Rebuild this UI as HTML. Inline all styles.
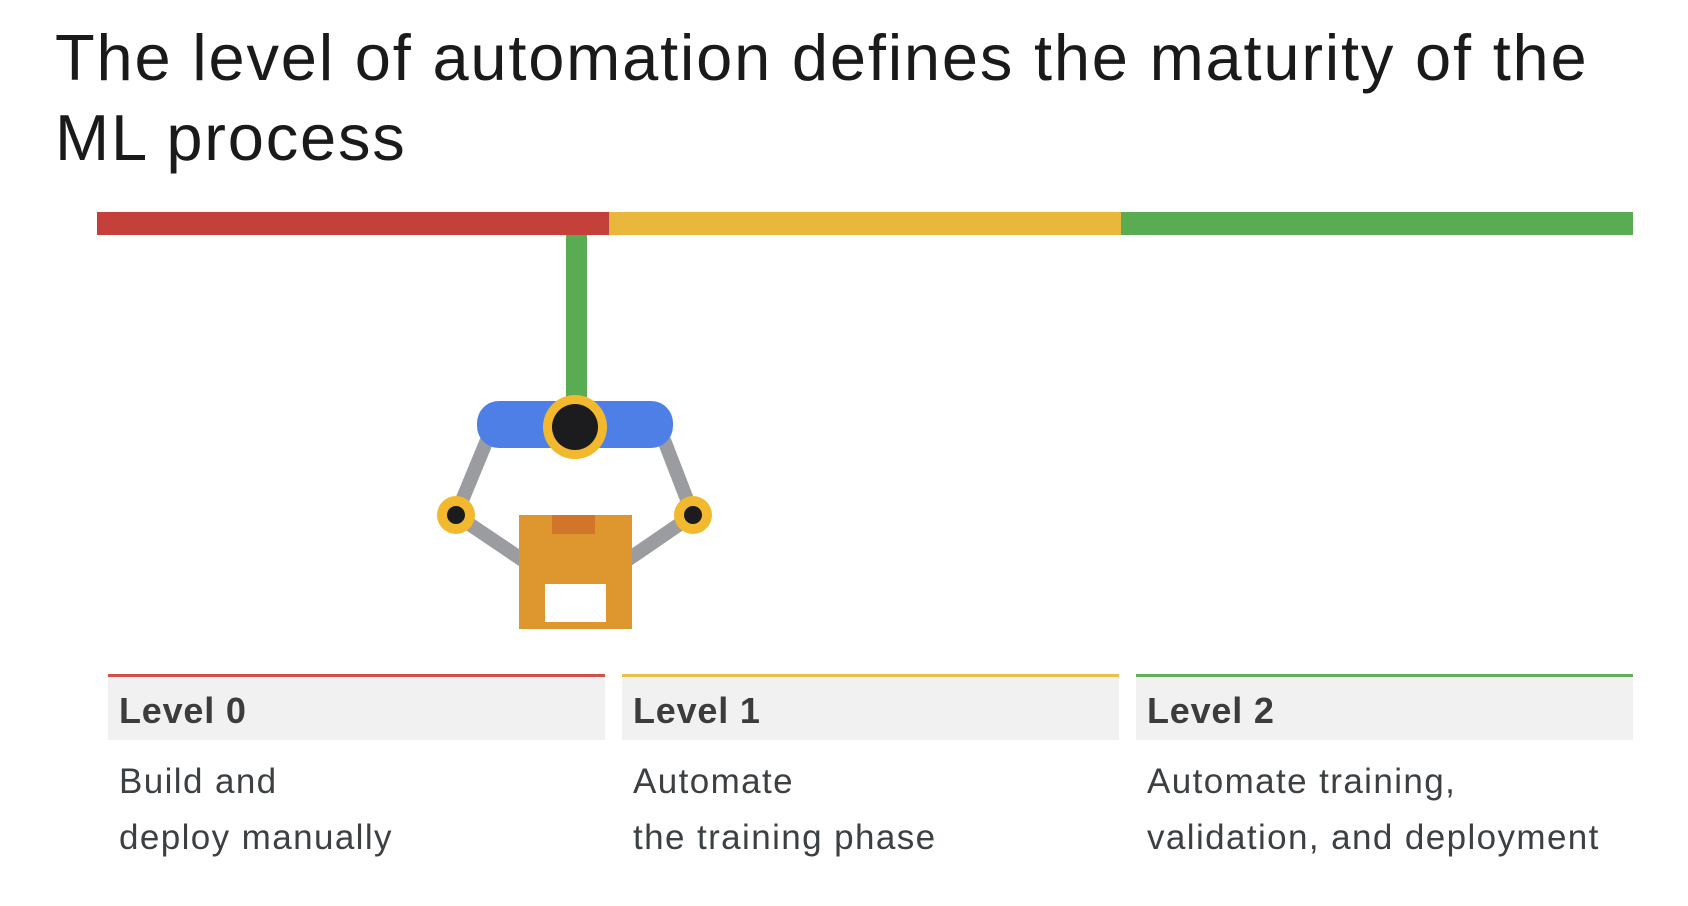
<!DOCTYPE html>
<html><head><style>
body{margin:0;width:1688px;height:906px;background:#fff;font-family:"Liberation Sans",sans-serif;overflow:hidden;position:relative;color:#202124}
.t{position:absolute;left:55px;top:18px;font-size:65px;line-height:80px;letter-spacing:1.8px;color:#1a1a1a}
.card{position:absolute;top:674px;width:497px}
.hd{height:66px;background:#f1f1f2;border-top:3px solid;box-sizing:border-box;font-size:36px;font-weight:bold;color:#3c3c3c;padding:13px 0 0 11px;letter-spacing:0.8px}
.ds{font-size:35px;line-height:56px;color:#3c4043;padding:14px 0 0 11px;letter-spacing:1.4px}
</style></head><body>
<div class="t">The level of automation defines the maturity of the<br>ML process</div>
<svg width="1688" height="906" style="position:absolute;left:0;top:0">
<rect x="97" y="212" width="513" height="23" fill="#c5403a"/>
<rect x="609" y="212" width="513" height="23" fill="#e8b73b"/>
<rect x="1121" y="212" width="512" height="23" fill="#5aac52"/>
<rect x="566" y="235" width="21" height="170" fill="#5aac52"/>
<g stroke="#9a9ca0" stroke-width="14" fill="none">
<polyline points="487,440 456,515 530,565"/>
<polyline points="664,440 693,515 620,565"/>
</g>
<rect x="477" y="401" width="196" height="47" rx="22" fill="#4e7fe6"/>
<circle cx="575" cy="427" r="32" fill="#f2b92e"/>
<circle cx="575" cy="427" r="23" fill="#1c1c1e"/>
<circle cx="456" cy="515" r="19" fill="#f2b92e"/>
<circle cx="456" cy="515" r="9" fill="#1c1c1e"/>
<circle cx="693" cy="515" r="19" fill="#f2b92e"/>
<circle cx="693" cy="515" r="9" fill="#1c1c1e"/>
<rect x="519" y="515" width="113" height="114" fill="#de962f"/>
<rect x="552" y="515" width="43" height="19" fill="#d0752a"/>
<rect x="545" y="584" width="61" height="38" fill="#fff"/>
</svg>
<div class="card" style="left:108px"><div class="hd" style="border-color:#d2504a">Level 0</div><div class="ds">Build and<br>deploy manually</div></div>
<div class="card" style="left:622px"><div class="hd" style="border-color:#ebc04a">Level 1</div><div class="ds">Automate<br>the training phase</div></div>
<div class="card" style="left:1136px"><div class="hd" style="border-color:#62b05a">Level 2</div><div class="ds">Automate training,<br>validation, and deployment</div></div>
</body></html>
